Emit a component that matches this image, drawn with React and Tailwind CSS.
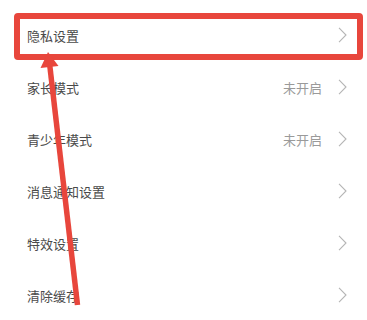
export default function App() {
  const rows = [
    { label: "隐私设置" },
    { label: "家长模式", value: "未开启" },
    { label: "青少年模式", value: "未开启" },
    { label: "消息通知设置" },
    { label: "特效设置" },
    { label: "清除缓存" },
  ];
  return (
    <div
      className="relative w-[367px] h-[320px] overflow-hidden bg-white"
      style={{ fontFamily: '"Noto Sans CJK SC", "Noto Sans", sans-serif' }}
    >
      <div className="flex flex-col pt-[9px]">
        {rows.map((r) => (
          <div key={r.label} className="flex items-center h-[52px] pl-[27px] pr-[20px]">
            <span className="flex-1 text-[13px] leading-none text-[#4a4a4a]">{r.label}</span>
            {r.value && (
              <span className="text-[13px] leading-none text-[#9a9a9a] mr-[16px]">{r.value}</span>
            )}
            <svg width="9" height="16" viewBox="0 0 9 16" fill="none">
              <path d="M1 0.8 L8 8 L1 15.2" stroke="#b5b5b5" strokeWidth="1.1" />
            </svg>
          </div>
        ))}
      </div>
      <div className="absolute left-[14px] top-[13px] w-[349px] h-[47px] border-[6px] border-[#e8463c] rounded-[4px]" />
      <svg className="absolute left-0 top-0" width="367" height="320" viewBox="0 0 367 320">
        <line x1="49.6" y1="64" x2="77.5" y2="305" stroke="#e8463c" strokeWidth="5.5" />
        <polygon points="48,52 40.5,68 58.5,66" fill="#e8463c" />
      </svg>
    </div>
  );
}
